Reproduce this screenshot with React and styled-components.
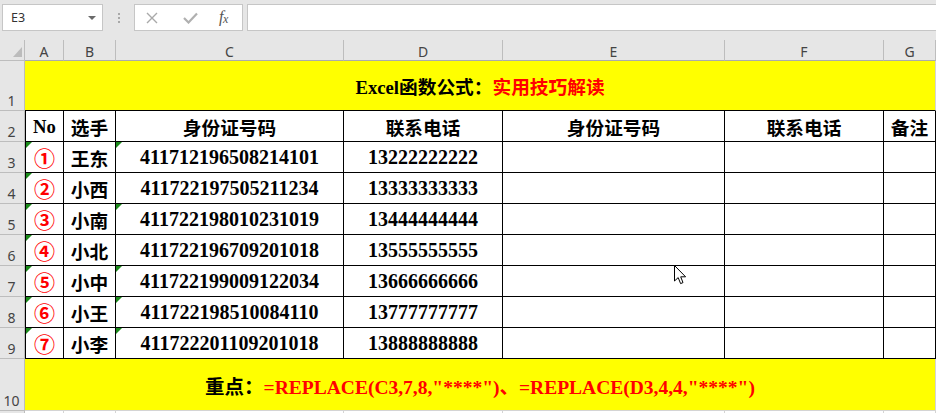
import React from "react";
import styled, { createGlobalStyle, css } from "styled-components";

const GlobalStyle = createGlobalStyle`
  html, body { margin: 0; padding: 0; background: #ffffff; }
  body { width: 936px; height: 413px; overflow: hidden; font-family: "Noto Sans", "Liberation Sans", sans-serif; }
  #root { width: 936px; height: 413px; overflow: hidden; position: relative; }
`;

const GRID_COLS = "25px 39px 52px 228px 159px 222px 159px 52px";
const HEAD_BG = "#e6e6e6";
const HEAD_LINE = "#bdbdbd";
const GRID_LINE = "#d4d4d4";
const SERIF = `"Liberation Serif", "Noto Sans CJK SC", serif`;

const Page = styled.div`
  width: 936px;
  height: 413px;
  display: flex;
  flex-direction: column;
  background: #fff;
`;

const Toolbar = styled.div`
  height: 40px;
  flex: none;
  background: ${HEAD_BG};
  display: flex;
  align-items: flex-start;
  padding: 4px 0 0 2px;
  box-sizing: border-box;
`;

const NameBox = styled.div`
  width: 101px;
  height: 27px;
  box-sizing: border-box;
  background: #fff;
  border: 1px solid #c6c6c6;
  display: flex;
  align-items: center;
  justify-content: space-between;
  padding: 0 6px 0 8px;
  font-family: "Noto Sans", "Liberation Sans", sans-serif;
  font-size: 12.5px;
  color: #333;
`;

const DropArrow = styled.span`
  width: 0;
  height: 0;
  border-left: 4px solid transparent;
  border-right: 4px solid transparent;
  border-top: 4px solid #6a6a6a;
  margin-top: 1px;
`;

const DotSep = styled.div`
  width: 31px;
  height: 27px;
  display: flex;
  flex-direction: column;
  align-items: center;
  justify-content: center;
  gap: 2px;
`;

const Dot = styled.span`
  width: 2px;
  height: 2px;
  background: #a8a8a8;
`;

const FxBox = styled.div`
  width: 109px;
  height: 27px;
  box-sizing: border-box;
  background: #fff;
  border: 1px solid #c6c6c6;
  display: flex;
  align-items: center;
  padding-left: 11px;
`;

const FxSlot = styled.span`
  width: ${(p) => p.$w}px;
  display: flex;
  align-items: center;
  justify-content: flex-start;
`;

const FxText = styled.span`
  font-family: "Liberation Serif", serif;
  font-style: italic;
  font-size: 16px;
  color: #555;
  letter-spacing: -0.5px;
  sub { font-size: 12px; vertical-align: -1px; }
`;

const FormulaInput = styled.div`
  flex: 1;
  height: 27px;
  margin-left: 4px;
  box-sizing: border-box;
  background: #fff;
  border: 1px solid #c6c6c6;
  border-right: none;
`;

const Sheet = styled.div`
  display: grid;
  grid-template-columns: ${GRID_COLS};
  grid-template-rows: 21px 50px repeat(8, 31px) 52px 10px;
  position: relative;
`;

const Corner = styled.div`
  background: ${HEAD_BG};
  border-right: 1px solid ${HEAD_LINE};
  border-bottom: 1px solid ${HEAD_LINE};
  position: relative;
  &::after {
    content: "";
    position: absolute;
    right: 2px;
    bottom: 3px;
    width: 0;
    height: 0;
    border-left: 9px solid transparent;
    border-bottom: 10px solid #bcbcbc;
  }
`;

const ColHead = styled.div`
  background: ${HEAD_BG};
  border-right: 1px solid ${HEAD_LINE};
  border-bottom: 1px solid #ababab;
  display: flex;
  align-items: center;
  justify-content: center;
  font-family: "Noto Sans", "Liberation Sans", sans-serif;
  font-size: 14px;
  color: #444;
  padding-top: 2px;
  box-sizing: border-box;
`;

const RowHead = styled.div`
  background: ${HEAD_BG};
  border-right: 1px solid ${HEAD_LINE};
  border-bottom: 1px solid ${HEAD_LINE};
  display: flex;
  align-items: flex-end;
  justify-content: center;
  font-family: "Noto Sans", "Liberation Sans", sans-serif;
  font-size: 14px;
  line-height: 18px;
  color: #444;
  padding-right: 1px;
  padding-bottom: ${(p) => p.$padBottom || 0}px;
  box-sizing: border-box;
  overflow: hidden;
`;

const Banner = styled.div`
  grid-column: span 7;
  background: #ffff00;
  border-right: 1px solid ${GRID_LINE};
  border-bottom: 1px solid ${(p) => (p.$blackBottom ? "#000" : GRID_LINE)};
  display: flex;
  align-items: center;
  justify-content: center;
  font-family: ${SERIF};
  font-weight: bold;
  font-size: ${(p) => p.$size || 18.7}px;
  color: #000;
  padding-top: ${(p) => p.$padTop || 0}px;
  box-sizing: border-box;
  white-space: pre;
`;

const Red = styled.span`
  color: #ff0000;
`;

const Cell = styled.div`
  position: relative;
  background: #fff;
  border-right: 1px solid #000;
  border-bottom: 1px solid #000;
  ${(p) => p.$first && css`border-left: 1px solid #000;`}
  display: flex;
  align-items: center;
  justify-content: center;
  font-family: ${SERIF};
  font-weight: bold;
  font-size: ${(p) => (p.$num ? "20px" : "18.7px")};
  color: #000;
  box-sizing: border-box;
  white-space: nowrap;
  padding-top: 1px;
  ${(p) =>
    p.$flag &&
    css`
      &::before {
        content: "";
        position: absolute;
        left: 0;
        top: 0;
        width: 0;
        height: 0;
        border-top: 6px solid #1a8a1a;
        border-right: 6px solid transparent;
      }
    `}
`;

const Circled = styled.span`
  font-family: "Noto Sans CJK SC", "DejaVu Sans", sans-serif;
  font-weight: 700;
  font-size: 21px;
  color: #ff0000;
  line-height: 1;
`;

const EmptyCell = styled.div`
  background: #fff;
  border-right: 1px solid ${GRID_LINE};
`;

const Cursor = styled.svg`
  position: absolute;
  left: 674px;
  top: 225px;
  pointer-events: none;
`;

const people = [
  { no: "①", name: "王东", id: "411712196508214101", tel: "13222222222", fa: true, fc: true },
  { no: "②", name: "小西", id: "411722197505211234", tel: "13333333333", fa: true, fc: false },
  { no: "③", name: "小南", id: "411722198010231019", tel: "13444444444", fa: true, fc: true },
  { no: "④", name: "小北", id: "411722196709201018", tel: "13555555555", fa: true, fc: false },
  { no: "⑤", name: "小中", id: "411722199009122034", tel: "13666666666", fa: true, fc: true },
  { no: "⑥", name: "小王", id: "411722198510084110", tel: "13777777777", fa: true, fc: true },
  { no: "⑦", name: "小李", id: "411722201109201018", tel: "13888888888", fa: true, fc: true },
];

const letters = ["A", "B", "C", "D", "E", "F", "G"];
const headers = ["No", "选手", "身份证号码", "联系电话", "身份证号码", "联系电话", "备注"];

export default function App() {
  return (
    <>
      <GlobalStyle />
      <Page>
        <Toolbar>
          <NameBox>
            <span>E3</span>
            <DropArrow />
          </NameBox>
          <DotSep>
            <Dot />
            <Dot />
            <Dot />
          </DotSep>
          <FxBox>
            <FxSlot $w={37}>
              <svg width="12" height="12" viewBox="0 0 12 12">
                <path d="M1 1 L11 11 M11 1 L1 11" stroke="#a9a9a9" strokeWidth="1.4" fill="none" />
              </svg>
            </FxSlot>
            <FxSlot $w={36}>
              <svg width="15" height="12" viewBox="0 0 15 12">
                <path d="M1 6 L5.5 10.5 L14 1.5" stroke="#b0b0b0" strokeWidth="2.2" fill="none" />
              </svg>
            </FxSlot>
            <FxSlot $w={20}>
              <FxText>
                f<sub>x</sub>
              </FxText>
            </FxSlot>
          </FxBox>
          <FormulaInput />
        </Toolbar>
        <Sheet>
          <Corner />
          {letters.map((l) => (
            <ColHead key={l}>{l}</ColHead>
          ))}

          <RowHead>1</RowHead>
          <Banner $blackBottom>
            Excel函数公式：<Red>实用技巧解读</Red>
          </Banner>

          <RowHead>2</RowHead>
          {headers.map((h, i) => (
            <Cell key={i} $first={i === 0}>
              {h}
            </Cell>
          ))}

          {people.map((p, r) => (
            <React.Fragment key={p.id}>
              <RowHead>{r + 3}</RowHead>
              <Cell $first $flag={p.fa}>
                <Circled>{p.no}</Circled>
              </Cell>
              <Cell>{p.name}</Cell>
              <Cell $num $flag={p.fc}>
                {p.id}
              </Cell>
              <Cell $num>{p.tel}</Cell>
              <Cell />
              <Cell />
              <Cell />
            </React.Fragment>
          ))}

          <RowHead>10</RowHead>
          <Banner $padTop={2} $size={19.5}>
            重点：<Red>=REPLACE(C3,7,8,"****")、=REPLACE(D3,4,4,"****")</Red>
          </Banner>

          <RowHead />
          {letters.map((l) => (
            <EmptyCell key={l} />
          ))}

          <Cursor width="14" height="21" viewBox="0 0 14 21">
            <path
              d="M0.5 0.5 L0.5 16 L4.2 12.6 L6.6 18.6 L9 17.6 L6.7 11.8 L11.6 11.8 Z"
              fill="#fff"
              stroke="#000"
              strokeWidth="1"
              strokeLinejoin="miter"
            />
          </Cursor>
        </Sheet>
      </Page>
    </>
  );
}
